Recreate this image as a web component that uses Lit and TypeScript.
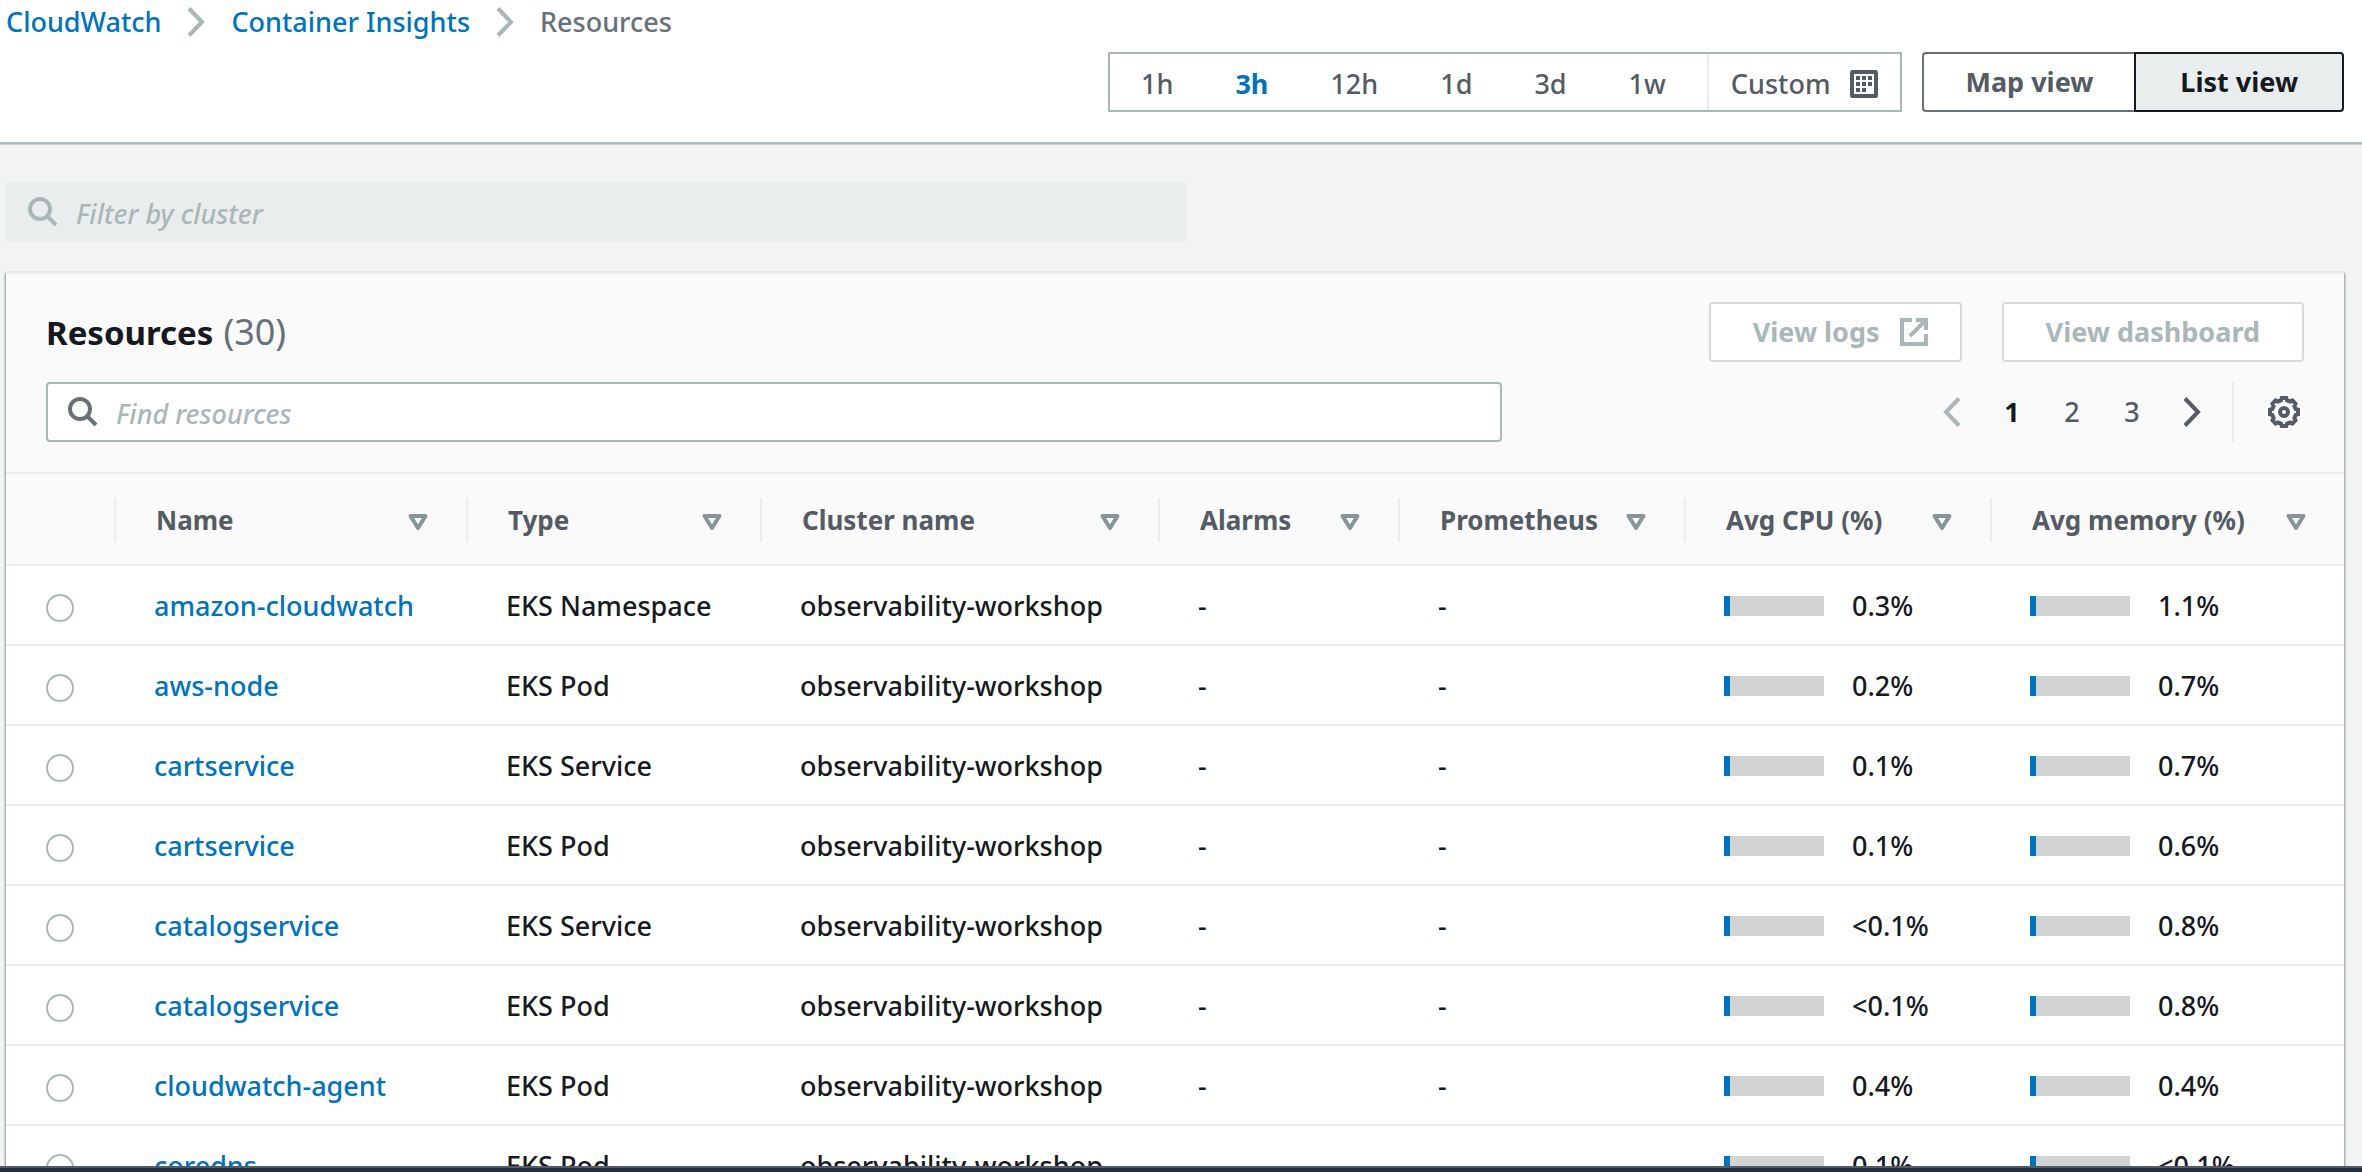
import { LitElement, html, css, svg } from "lit";
import { customElement, state } from "lit/decorators.js";
import { classMap } from "lit/directives/class-map.js";

interface Resource {
  name: string;
  type: string;
  cpu: string;
  memory: string;
}

const RESOURCES: Resource[] = [
  { name: "amazon-cloudwatch", type: "EKS Namespace", cpu: "0.3%", memory: "1.1%" },
  { name: "aws-node", type: "EKS Pod", cpu: "0.2%", memory: "0.7%" },
  { name: "cartservice", type: "EKS Service", cpu: "0.1%", memory: "0.7%" },
  { name: "cartservice", type: "EKS Pod", cpu: "0.1%", memory: "0.6%" },
  { name: "catalogservice", type: "EKS Service", cpu: "<0.1%", memory: "0.8%" },
  { name: "catalogservice", type: "EKS Pod", cpu: "<0.1%", memory: "0.8%" },
  { name: "cloudwatch-agent", type: "EKS Pod", cpu: "0.4%", memory: "0.4%" },
  { name: "coredns", type: "EKS Pod", cpu: "0.1%", memory: "<0.1%" },
];

const CLUSTER = "observability-workshop";

const COLUMNS = [
  { label: "Name", cls: "c-name" },
  { label: "Type", cls: "c-type" },
  { label: "Cluster name", cls: "c-cluster" },
  { label: "Alarms", cls: "c-alarms" },
  { label: "Prometheus", cls: "c-prometheus" },
  { label: "Avg CPU (%)", cls: "c-cpu" },
  { label: "Avg memory (%)", cls: "c-memory" },
];

const RANGES = ["1h", "3h", "12h", "1d", "3d", "1w"];

const chevronRight = html`<svg class="chevron" viewBox="0 0 18 30" aria-hidden="true">
  <path d="M2 1.5 15 15 2 28.5" />
</svg>`;

const chevronLeft = html`<svg class="chevron" viewBox="0 0 18 30" aria-hidden="true">
  <path d="M16 1.5 3 15 16 28.5" />
</svg>`;

const searchIcon = html`<svg class="search-icon" viewBox="0 0 32 32" aria-hidden="true">
  <circle cx="14" cy="13" r="10" />
  <path d="m21 20 9 9" />
</svg>`;

const calendarIcon = html`<svg class="calendar" viewBox="0 0 28 28" aria-hidden="true">
  <rect x="2" y="2" width="24" height="24" rx="0.5" />
  ${[6, 12, 18].flatMap((y, r) =>
    [6, 12, 18].slice(0, r === 2 ? 2 : 3).map(
      (x) => svg`<rect class="cell" x=${x} y=${y} width="4" height="4" />`
    )
  )}
</svg>`;

const externalIcon = html`<svg class="external" viewBox="0 0 28 28" aria-hidden="true">
  <path d="M12 2H2v24h24V16M16 2h10v10M25.500 2.500 10 18" />
</svg>`;

/** Outline of a cog with eight rounded teeth. */
const gearPath = (() => {
  const pts: string[] = [];
  for (let i = 0; i < 8; i++) {
    const steps: [number, number][] = [[-9, 14.2], [9, 14.2], [15, 12], [30, 12]];
    for (const [deg, r] of steps) {
      const a = ((i * 45 + deg - 90) * Math.PI) / 180;
      pts.push(`${(16 + r * Math.cos(a)).toFixed(2)} ${(16 + r * Math.sin(a)).toFixed(2)}`);
    }
  }
  return `M${pts.join("L")}Z`;
})();

const gearIcon = html`<svg class="gear" viewBox="0 0 32 32" aria-hidden="true">
  <path d=${gearPath} />
  <circle cx="16" cy="16" r="4" />
</svg>`;

const sortIcon = html`<svg class="sort" viewBox="0 0 20 16" aria-hidden="true">
  <path d="M2.500 2h15L10 14Z" />
</svg>`;

@customElement("app-root")
export class AppRoot extends LitElement {
  @state() private range = "3h";
  @state() private page = 1;

  static styles = css`
    :host {
      --blue: #0073bb;
      --ink: #16191f;
      --slate: #545b64;
      --muted: #687078;
      --line: #eaeded;
      --edge: #aab7b8;
      display: flex;
      flex-direction: column;
      height: 100vh;
      overflow: hidden;
      background: #f2f3f3;
      color: var(--ink);
      font: 500 27px/36px "Noto Sans", "Open Sans", sans-serif;
    }
    *, *::before { box-sizing: border-box; }
    button, input { font: inherit; color: inherit; margin: 0; }
    button { background: none; border: 0; padding: 0; cursor: pointer; white-space: nowrap; }
    a { color: var(--blue); text-decoration: none; }
    svg { flex: none; display: block; fill: none; stroke: currentColor; stroke-width: 4; }

    .top {
      flex: none;
      background: #fff;
      border-bottom: 2px solid #b1babf;
      box-shadow: 0 1px 1px rgba(0, 28, 36, 0.15);
      padding: 0 18px 30px 6px;
    }
    .crumbs { display: flex; align-items: center; gap: 26px; height: 44px; color: var(--muted); }
    .chevron { width: 18px; height: 30px; }
    .crumbs .chevron { color: var(--edge); }
    .controls { display: flex; justify-content: flex-end; gap: 20px; margin-top: 8px; }
    .ranges { display: flex; height: 60px; border: 2px solid var(--edge); background: #fff; color: var(--slate); }
    .ranges button { padding: 3px 31px 0; }
    .ranges .on { color: var(--blue); font-weight: 700; }
    .ranges .custom { display: flex; align-items: center; gap: 20px; margin-left: 10px; padding: 3px 22px 0; border-left: 2px solid var(--line); }
    .calendar { width: 28px; height: 28px; }
    .calendar .cell { fill: currentColor; stroke: none; }
    .views { display: flex; font-weight: 700; }
    .views button { height: 60px; padding: 0 41px; border: 2px solid var(--muted); border-right: 0; border-radius: 4px 0 0 4px; color: var(--slate); }
    .views .on { padding: 0 44px; border: 2px solid var(--ink); border-radius: 0 4px 4px 0; background: var(--line); color: var(--ink); }

    .body { flex: 1; min-height: 0; overflow: hidden; padding: 38px 18px 0 6px; }
    .search { display: flex; align-items: center; gap: 18px; height: 60px; padding: 0 18px; border: 2px solid var(--edge); border-radius: 4px; background: #fff; }
    .search input { flex: 1; min-width: 0; height: 100%; border: 0; outline: 0; padding: 2px 0 0; background: none; }
    .search input::placeholder { color: var(--edge); opacity: 1; font-style: italic; }
    .search-icon { width: 32px; height: 32px; color: var(--muted); }
    .filter { max-width: 1180px; background: var(--line); border-color: var(--line); }
    .filter .search-icon { color: var(--edge); }

    .panel { margin-top: 30px; border-top: 2px solid var(--line); background: #fff; box-shadow: -1px 1px 2px rgba(0, 28, 36, 0.4), 1px 1px 2px rgba(0, 28, 36, 0.4); }
    .panel-head { display: grid; gap: 20px; padding: 28px 40px 30px; background: #fafafa; border-bottom: 2px solid var(--line); }
    .bar { display: flex; align-items: center; justify-content: space-between; height: 60px; }
    h1 { display: flex; align-items: baseline; gap: 10px; margin: 0; font-size: 33px; line-height: 44px; font-weight: 700; }
    h1 span { color: var(--muted); font-size: 36px; font-weight: 400; }
    .actions { display: flex; gap: 40px; }
    .actions button { display: flex; align-items: center; gap: 20px; height: 60px; padding: 0 42px; background: #fff; border: 2px solid #d5dbdb; border-radius: 4px; color: var(--edge); font-weight: 700; cursor: default; }
    .actions .with-icon { padding-right: 32px; }
    .external { width: 28px; height: 28px; }
    .find { flex: 1; max-width: 1456px; }
    .pager { display: flex; align-items: center; color: var(--slate); }
    .pager button { display: flex; justify-content: center; width: 60px; }
    .pager .on { color: var(--ink); font-weight: 700; }
    .pager button:disabled { color: var(--edge); cursor: default; }
    .pager .settings { align-items: center; justify-content: flex-end; height: 60px; width: 72px; margin-left: 10px; padding-right: 4px; border-left: 2px solid var(--line); }
    .gear { width: 32px; height: 32px; }

    table { width: 100%; table-layout: fixed; border-collapse: separate; border-spacing: 0; }
    .c-pick { width: 110px; }
    .c-name { width: 352px; }
    .c-type { width: 294px; }
    .c-cluster { width: 398px; }
    .c-alarms { width: 240px; }
    .c-prometheus { width: 286px; }
    .c-cpu { width: 306px; }
    .c-memory { width: 352px; }
    th { height: 92px; padding: 2px 0 0; background: #fafafa; border-bottom: 2px solid var(--line); color: var(--slate); font-size: 26px; text-align: left; white-space: nowrap; }
    .head { display: flex; align-items: center; justify-content: space-between; width: 100%; height: 44px; padding: 0 38px 0 40px; border-right: 2px solid var(--line); font-weight: 700; }
    th:last-child .head { border-right: 0; }
    .sort { width: 20px; height: 16px; margin-top: 4px; color: #879596; stroke-linejoin: round; }
    td { height: 80px; padding: 2px 0 0 38px; border-bottom: 2px solid var(--line); background: #fff; white-space: nowrap; }
    td.pick { padding: 6px 0 0 40px; }
    .pick input { appearance: none; display: block; width: 28px; height: 28px; border: 2px solid var(--edge); border-radius: 50%; background: #fff; }
    .pick input:checked { border: 8px solid var(--blue); }
    .metric { display: flex; align-items: center; gap: 28px; }
    .track { width: 100px; height: 20px; background: #d3d3d3; }
    .fill { width: 6px; height: 100%; background: var(--blue); }
    .dock { flex: none; height: 6px; border-top: 2px solid var(--slate); background: #232f3e; }
  `;

  private metric(value: string) {
    return html`<div class="metric"><div class="track"><div class="fill"></div></div><span>${value}</span></div>`;
  }

  render() {
    return html`
      <header class="top">
        <nav class="crumbs" aria-label="Breadcrumbs">
          <a href="#cloudwatch">CloudWatch</a>${chevronRight}
          <a href="#insights">Container Insights</a>${chevronRight}
          <span>Resources</span>
        </nav>
        <div class="controls">
          <div class="ranges">
            ${RANGES.map(
              (r) => html`<button class=${classMap({ on: r === this.range })} @click=${() => (this.range = r)}>${r}</button>`
            )}
            <button class="custom">Custom ${calendarIcon}</button>
          </div>
          <div class="views">
            <button>Map view</button>
            <button class="on">List view</button>
          </div>
        </div>
      </header>
      <main class="body">
        <label class="search filter">
          ${searchIcon}
          <input type="text" disabled placeholder="Filter by cluster" aria-label="Filter by cluster" />
        </label>
        <section class="panel">
          <div class="panel-head">
            <div class="bar">
              <h1>Resources <span>(30)</span></h1>
              <div class="actions">
                <button class="with-icon" disabled>View logs ${externalIcon}</button>
                <button disabled>View dashboard</button>
              </div>
            </div>
            <div class="bar">
              <label class="search find">
                ${searchIcon}
                <input type="text" placeholder="Find resources" aria-label="Find resources" />
              </label>
              <div class="pager">
                <button disabled aria-label="Previous page">${chevronLeft}</button>
                ${[1, 2, 3].map(
                  (p) => html`<button class=${classMap({ on: p === this.page })} @click=${() => (this.page = p)}>${p}</button>`
                )}
                <button aria-label="Next page">${chevronRight}</button>
                <button class="settings" aria-label="Preferences">${gearIcon}</button>
              </div>
            </div>
          </div>
          <table>
            <thead>
              <tr>
                <th class="c-pick"><div class="head"></div></th>
                ${COLUMNS.map(
                  (c) => html`<th class=${c.cls}><button class="head"><span>${c.label}</span>${sortIcon}</button></th>`
                )}
              </tr>
            </thead>
            <tbody>
              ${RESOURCES.map(
                (r) => html`<tr>
                  <td class="pick"><input type="radio" name="resource" aria-label=${r.name} /></td>
                  <td><a href="#resource">${r.name}</a></td>
                  <td>${r.type}</td>
                  <td>${CLUSTER}</td>
                  <td>-</td>
                  <td>-</td>
                  <td>${this.metric(r.cpu)}</td>
                  <td>${this.metric(r.memory)}</td>
                </tr>`
              )}
            </tbody>
          </table>
        </section>
      </main>
      <div class="dock"></div>
    `;
  }
}
